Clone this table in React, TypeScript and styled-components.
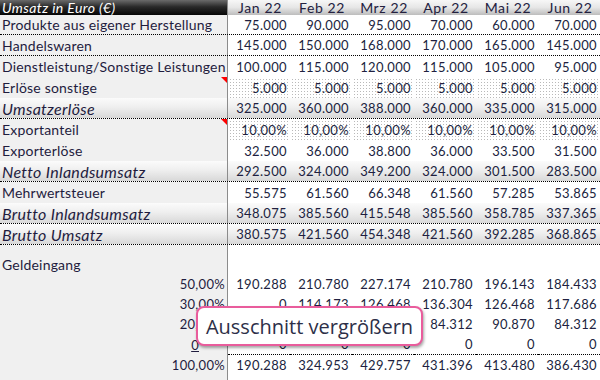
import React from 'react';
import styled, { createGlobalStyle, css } from 'styled-components';

const Global = createGlobalStyle`
  html, body { margin: 0; padding: 0; background: #ffffff; }
  body { font-family: Lato, "Open Sans", sans-serif; }
`;

const LABEL_W = 228;
const COL_W = 62;

const Sheet = styled.div`
  width: 600px;
  height: 380px;
  overflow: hidden;
  position: relative;
  display: flex;
  flex-direction: column;
  background: linear-gradient(to right, #f0f0f0 0, #f0f0f0 227px, #8c8c8c 227px, #8c8c8c 228px, #ffffff 228px);
  color: #1f1c3e;
  font-size: 14px;
  letter-spacing: 0.2px;
`;

const Grid = styled.div<{ $h: number; $line?: boolean }>`
  display: grid;
  grid-template-columns: ${LABEL_W}px repeat(6, ${COL_W}px);
  height: ${(p) => p.$h}px;
  box-sizing: border-box;
  flex: none;
  position: relative;
  ${(p) =>
    p.$line &&
    css`
      border-bottom: 1px dotted #000;
    `}
`;

const HeaderLeft = styled.div`
  background: linear-gradient(to bottom, #6a6a6a 0%, #2a2a2a 45%, #050505 100%);
  color: #ffffff;
  font-style: italic;
  font-size: 14px;
  letter-spacing: 0.4px;
  line-height: 15px;
  padding-left: 2px;
  border-right: 1px solid #8c8c8c;
  white-space: nowrap;
`;

const HeaderMonth = styled.div`
  background: linear-gradient(to bottom, #f7f7f7 0%, #e6e6e6 50%, #bdbdbd 100%);
  text-align: center;
  line-height: 15px;
  font-size: 14px;
  letter-spacing: 0.6px;
  padding-left: 2px;
  color: #23213f;
  white-space: nowrap;
`;

const Label = styled.div<{ $total?: boolean; $align?: 'right'; $comment?: boolean }>`
  position: relative;
  border-right: 1px solid #8c8c8c;
  padding: 0 2px;
  display: flex;
  align-items: center;
  justify-content: ${(p) => (p.$align === 'right' ? 'flex-end' : 'flex-start')};
  white-space: nowrap;
  ${(p) =>
    p.$align === 'right' &&
    css`
      font-size: 13px;
      letter-spacing: 0.3px;
    `}
  ${(p) =>
    p.$total &&
    css`
      font-style: italic;
      font-size: 16px;
      letter-spacing: 0.3px;
    `}
  ${(p) =>
    p.$comment &&
    css`
      &::after {
        content: '';
        position: absolute;
        top: 0;
        right: 0;
        border-top: 6px solid #ff0000;
        border-left: 6px solid transparent;
      }
    `}
`;

const Underlined = styled.span<{ $shift?: number }>`
  text-decoration: underline;
  margin-right: ${(p) => p.$shift ?? 0}px;
`;

const Value = styled.div<{ $input?: boolean; $dotted?: boolean }>`
  display: flex;
  align-items: center;
  justify-content: flex-end;
  padding-right: 3px;
  white-space: nowrap;
  color: #201f40;
  font-size: 13px;
  letter-spacing: 0.35px;
  box-sizing: border-box;
  ${(p) =>
    p.$input &&
    css`
      background-image: radial-gradient(circle, #b9b9b9 0.6px, transparent 0.9px);
      background-size: 3px 3px;
      background-position: 1px 1px;
    `}
  ${(p) =>
    p.$dotted &&
    css`
      border-bottom: 1px dotted #000;
    `}
`;

const TotalGrid = styled(Grid)`
  background: linear-gradient(to bottom, #fbfbfb 0%, #efefef 45%, #d8d8d8 100%);
`;

const Spacer = styled.div<{ $h: number }>`
  height: ${(p) => p.$h}px;
  flex: none;
`;

const Tooltip = styled.div`
  position: absolute;
  left: 196px;
  top: 306px;
  width: 227px;
  height: 40px;
  box-sizing: border-box;
  background: #ffffff;
  border: 2px solid #e95c9c;
  border-radius: 8px;
  box-shadow: 1px 2px 3px rgba(0, 0, 0, 0.35);
  display: flex;
  align-items: center;
  justify-content: center;
  font-family: "Open Sans", "Noto Sans", sans-serif;
  font-size: 20px;
  letter-spacing: 0;
  color: #2d2f48;
  white-space: nowrap;
`;

const months = ['Jan 22', 'Feb 22', 'Mrz 22', 'Apr 22', 'Mai 22', 'Jun 22'];

type RowDef = {
  label: string;
  values: string[];
  total?: boolean;
  line?: boolean;
  input?: boolean;
  comment?: boolean;
};

const upper: RowDef[] = [
  { label: 'Produkte aus eigener Herstellung', values: ['75.000', '90.000', '95.000', '70.000', '60.000', '70.000'], line: true },
  { label: 'Handelswaren', values: ['145.000', '150.000', '168.000', '170.000', '165.000', '145.000'], line: true },
  { label: 'Dienstleistung/Sonstige Leistungen', values: ['100.000', '115.000', '120.000', '115.000', '105.000', '95.000'] },
  { label: 'Erlöse sonstige', values: ['5.000', '5.000', '5.000', '5.000', '5.000', '5.000'], input: true, comment: true },
  { label: 'Umsatzerlöse', values: ['325.000', '360.000', '388.000', '360.000', '335.000', '315.000'], total: true, line: true },
  { label: 'Exportanteil', values: ['10,00%', '10,00%', '10,00%', '10,00%', '10,00%', '10,00%'], input: true, comment: true },
  { label: 'Exporterlöse', values: ['32.500', '36.000', '38.800', '36.000', '33.500', '31.500'] },
  { label: 'Netto Inlandsumsatz', values: ['292.500', '324.000', '349.200', '324.000', '301.500', '283.500'], total: true, line: true },
  { label: 'Mehrwertsteuer', values: ['55.575', '61.560', '66.348', '61.560', '57.285', '53.865'] },
  { label: 'Brutto Inlandsumsatz', values: ['348.075', '385.560', '415.548', '385.560', '358.785', '337.365'], total: true, line: true },
  { label: 'Brutto Umsatz', values: ['380.575', '421.560', '454.348', '421.560', '392.285', '368.865'], total: true, line: true },
];

const cash: { label: React.ReactNode; values: string[]; line?: boolean }[] = [
  { label: '50,00%', values: ['190.288', '210.780', '227.174', '210.780', '196.143', '184.433'] },
  { label: '30,00%', values: ['0', '114.173', '126.468', '136.304', '126.468', '117.686'] },
  { label: '20,00%', values: ['0', '0', '76.115', '84.312', '90.870', '84.312'] },
  { label: <Underlined $shift={26}>0</Underlined>, values: ['0', '0', '0', '0', '0', '0'], line: true },
  { label: '100,00%', values: ['190.288', '324.953', '429.757', '431.396', '413.480', '386.430'] },
];

export default function App() {
  return (
    <>
      <Global />
      <Sheet>
        <Grid $h={15}>
          <HeaderLeft>Umsatz in Euro (€)</HeaderLeft>
          {months.map((m) => (
            <HeaderMonth key={m}>{m}</HeaderMonth>
          ))}
        </Grid>
        {upper.map((r, idx) => {
          const G = r.total ? TotalGrid : Grid;
          return (
            <G key={r.label} $h={idx === 0 ? 20 : 21} $line={r.line}>
              <Label $total={r.total} $comment={r.comment}>
                {r.label}
              </Label>
              {r.values.map((v, i) => (
                <Value key={i} $input={r.input}>
                  {v}
                </Value>
              ))}
            </G>
          );
        })}
        <Spacer $h={9} />
        <Grid $h={20}>
          <Label>Geldeingang</Label>
        </Grid>
        {cash.map((r, idx) => (
          <Grid key={idx} $h={r.line ? 21 : 20}>
            <Label $align="right">{r.label}</Label>
            {r.values.map((v, i) => (
              <Value key={i} $dotted={r.line}>
                {v}
              </Value>
            ))}
          </Grid>
        ))}
        <Tooltip>Ausschnitt vergrößern</Tooltip>
      </Sheet>
    </>
  );
}
